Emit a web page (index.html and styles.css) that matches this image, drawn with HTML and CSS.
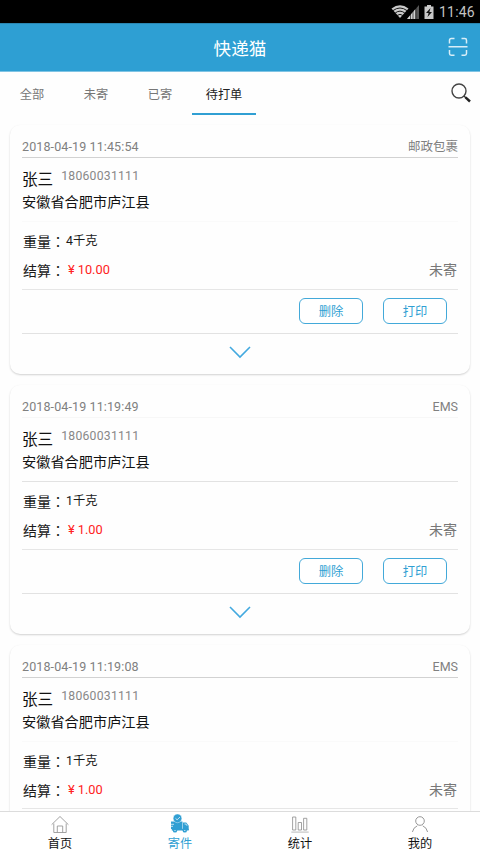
FILE: index.html
```
<!DOCTYPE html>
<html lang="zh-CN">
<head>
<meta charset="utf-8">
<title>快递猫</title>
<link rel="stylesheet" href="styles.css">
</head>
<body>
<div class="status">
  <svg class="wifi" width="18" height="14" viewBox="0 0 18 14"><path d="M9 13 0.5 3.5Q9-3 17.5 3.5Z" fill="#c9c9c9"/><path d="M2 5.6Q9 .4 16 5.6M4.2 8Q9 4.3 13.8 8M6.3 10.4Q9 8.3 11.7 10.4" fill="none" stroke="#000" stroke-width=".9"/></svg>
  <svg class="signal" width="13" height="14" viewBox="0 0 13 14"><path d="M0 14 12 0V14Z" fill="#555"/><path d="M0 14 8.5 4V14Z" fill="#d0d0d0"/><path d="M3.5 9v5M6 6v8M8.8 3v11" stroke="#000" stroke-width=".6"/></svg>
  <svg class="battery" width="10" height="14" viewBox="0 0 10 14"><path d="M3 0h4v1.5h2.5V14h-9V1.5H3Z" fill="#c9c9c9"/><path d="M6.5 3 2 8h2.6L3.5 12 8 7H5.4Z" fill="#111"/></svg>
  <span class="clock">11:46</span>
</div>
<header class="bar">
  <h1>快递猫</h1>
  <svg class="scan" width="20" height="20" viewBox="0 0 20 20" fill="none" stroke="#d9eef8" stroke-width="1.5"><path d="M1.5 6.5V3.2Q1.5 1.5 3.2 1.5H6.5M13.5 1.5h3.3q1.7 0 1.7 1.7V6.5M1.5 13v3.6q0 1.7 1.7 1.7H6.5M13.5 18.3h3.3q1.7 0 1.7-1.7V13M.5 9.7h19"/></svg>
</header>
<nav class="tabs">
  <a>全部</a><a>未寄</a><a>已寄</a><a class="on">待打单</a>
  <svg class="search" width="20" height="20" viewBox="0 0 20 20" fill="none"><circle cx="8" cy="8" r="7" stroke="#444" stroke-width="1.4"/><path d="m13 13 2 2" stroke="#333" stroke-width="1.5"/><path d="m14.5 14.3 4.5 4.2" stroke="#222" stroke-width="2.4"/></svg>
</nav>
<main class="list">
  <article class="card">
    <div class="head"><span class="date">2018-04-19 11:45:54</span><span>邮政包裹</span></div>
    <div class="who"><div class="person"><b>张三</b><span>18060031111</span></div><p>安徽省合肥市庐江县</p></div>
    <div class="info"><div class="line"><label>重量<u lang="zh-Hant">：</u></label><span>4千克</span></div><div class="line"><label>结算<u lang="zh-Hant">：</u></label><span class="price"><i>¥</i>10.00</span><em>未寄</em></div></div>
    <div class="actions"><button>删除</button><button>打印</button></div>
    <div class="more"><svg width="22" height="13" viewBox="0 0 22 13"><path d="m1 1 10 10L21 1" fill="none" stroke="#43a9df" stroke-width="1.6"/></svg></div>
  </article>
  <article class="card alt">
    <div class="head"><span class="date">2018-04-19 11:19:49</span><span>EMS</span></div>
    <div class="who"><div class="person"><b>张三</b><span>18060031111</span></div><p>安徽省合肥市庐江县</p></div>
    <div class="info"><div class="line"><label>重量<u lang="zh-Hant">：</u></label><span>1千克</span></div><div class="line"><label>结算<u lang="zh-Hant">：</u></label><span class="price"><i>¥</i>1.00</span><em>未寄</em></div></div>
    <div class="actions"><button>删除</button><button>打印</button></div>
    <div class="more"><svg width="22" height="13" viewBox="0 0 22 13"><path d="m1 1 10 10L21 1" fill="none" stroke="#43a9df" stroke-width="1.6"/></svg></div>
  </article>
  <article class="card last">
    <div class="head"><span class="date">2018-04-19 11:19:08</span><span>EMS</span></div>
    <div class="who"><div class="person"><b>张三</b><span>18060031111</span></div><p>安徽省合肥市庐江县</p></div>
    <div class="info"><div class="line"><label>重量<u lang="zh-Hant">：</u></label><span>1千克</span></div><div class="line"><label>结算<u lang="zh-Hant">：</u></label><span class="price"><i>¥</i>1.00</span><em>未寄</em></div></div>
  </article>
</main>
<footer class="dock">
  <a><svg width="18" height="18" viewBox="0 0 18 18" fill="none" stroke="#999" stroke-width=".9"><path d="M.6 9.2 9 1l8.4 8.2M2.8 8v9h12.4V8M6.3 17v-6.5h5.4V17"/></svg>首页</a>
  <a class="on"><svg width="18" height="19" viewBox="0 0 18 19"><g fill="#309fd3"><path d="M0 7.5h11.5V15H0Z"/><path d="M12 8.5h3.2l2.5 3.3V16H12Z"/><path d="M.8 14.8h16.9v1.7H.8Z"/><circle cx="4" cy="16.4" r="2.2"/><circle cx="13.8" cy="16.4" r="2.2"/></g><circle cx="6.5" cy="4.4" r="4.3" fill="#309fd3" stroke="#fff" stroke-width=".4"/><path d="m4.5 4.3 1.6 1.5L9 3M0 10.3h3M0 12.3h2M13.5 10h1.4l1.2 1.8" fill="none" stroke="#fff" stroke-width=".7"/><circle cx="4" cy="16.5" r=".6" fill="#fff"/><circle cx="13.8" cy="16.5" r=".6" fill="#fff"/></svg>寄件</a>
  <a><svg width="18" height="18" viewBox="0 0 18 18" fill="none" stroke="#8c8c8c" stroke-width=".8"><path d="M1.6 1.5h3.2v13H1.6ZM7.2 7h3.3v7.5H7.2ZM12.6 2.8h3.2v11.7h-3.2Z"/><path d="M.3 16.6h17.4" stroke="#aaa"/></svg>统计</a>
  <a><svg width="18" height="18" viewBox="0 0 18 18" fill="none" stroke="#8c8c8c" stroke-width=".9"><circle cx="9" cy="5.5" r="4.3"/><path d="M1.4 16.5Q2.3 12 6.3 10.3M11.7 10.3q4 1.7 4.9 6.2"/></svg>我的</a>
</footer>
</body>
</html>
```
FILE: styles.css
```
* { box-sizing: border-box; margin: 0; padding: 0; }
body {
  width: 480px; height: 854px; overflow: hidden;
  display: flex; flex-direction: column;
  background: #fefefe; color: #1a1a1a;
  font-family: Roboto, "Noto Sans CJK SC", sans-serif;
}
svg { display: block; flex: none; }
.status { height: 23px; flex: none; background: #000; display: flex; justify-content: flex-end; align-items: center; padding-right: 5px; }
.signal { margin: 0 4px 0 -2px; }
.battery { margin-right: 5px; }
.clock { color: #c4c4c4; font-size: 14px; letter-spacing: .2px; width: 36px; }
.bar { height: 49px; flex: none; background: #2e9fd3; border-bottom: 1px solid #80c4e4; border-top: 1px solid #2a86b1; display: flex; align-items: center; padding: 0 12px 0 32px; }
.bar h1 { flex: 1; text-align: center; color: #fff; font-size: 17.6px; line-height: 24px; font-weight: 400; padding-top: 2px; }
.scan { margin-top: -1px; }
.tabs { height: 43px; flex: none; display: flex; font-size: 12.2px; color: #777; }
.tabs a { width: 64px; height: 43px; text-align: center; line-height: 46px; }
.tabs a.on { color: #222; border-bottom: 2px solid #309fd3; }
.search { margin: 11px 9px 0 auto; }
.list { flex: 1; min-height: 0; overflow: hidden; padding: 10px 10px 0; display: flex; flex-direction: column; gap: 11px; }
.card { flex: none; height: 249px; padding: 0 12px; border-radius: 10px; background: #fefefe; box-shadow: 0 1px 2px rgba(0,0,0,.18); }
.head { height: 33px; border-bottom: 1px solid #d2d2d2; display: flex; justify-content: space-between; font-size: 12.5px; line-height: 18px; padding-top: 13px; color: #808080; }
.date { letter-spacing: .12px; }
.who { height: 64px; border-bottom: 1px solid #fafafa; padding-top: 9px; }
.person { display: flex; height: 24px; gap: 8px; }
.person b { font-weight: 400; font-size: 15.6px; line-height: 26px; color: #111; }
.person span { font-size: 12.2px; line-height: 18px; color: #888; letter-spacing: .25px; }
.who p { font-size: 14.2px; line-height: 23px; color: #111; }
.info { height: 68px; border-bottom: 1px solid #e6e6e6; padding: 6px 1px 0; }
.line { display: flex; height: 29px; line-height: 28px; font-size: 12.3px; color: #1a1a1a; }
.line label { font-size: 14px; width: 43px; white-space: nowrap; line-height: 26px; }
.line u { text-decoration: none; font-family: "Noto Sans CJK TC", sans-serif; }
.line span { line-height: 26px; }
.line .price { color: #ff2222; font-size: 12.8px; padding-left: 1px; }
.price i { font-style: normal; margin: 0 3px 0 1px; }
.line em { margin-left: auto; font-style: normal; font-size: 14px; color: #777; line-height: 27px; }
.actions { height: 44px; border-bottom: 1px solid #e2e2e2; display: flex; justify-content: flex-end; gap: 20px; padding: 8px 11px 0 0; }
.actions button { width: 64px; height: 26px; border: 1px solid #43a9d9; border-radius: 6px; background: #fff; color: #309fd3; font: 12.3px/24px Roboto, "Noto Sans CJK SC", sans-serif; padding-top: 1px; }
.more { display: flex; justify-content: center; padding-top: 12px; }
.alt .head { border-color: #f7f7f7; }
.alt .who { border-color: #e2e2e2; }
.last .info { height: 67px; }
.dock { height: 43px; flex: none; border-top: 1px solid #dcdcdc; display: flex; background: #fff; color: #111; font-size: 12.2px; }
.dock a { flex: 1; display: flex; flex-direction: column; align-items: center; line-height: 21px; padding-top: 3px; }
.dock svg { height: 19px; }
.dock a.on { color: #309fd3; padding-top: 2px; }
.dock a.on svg { margin-bottom: 1px; }
```
